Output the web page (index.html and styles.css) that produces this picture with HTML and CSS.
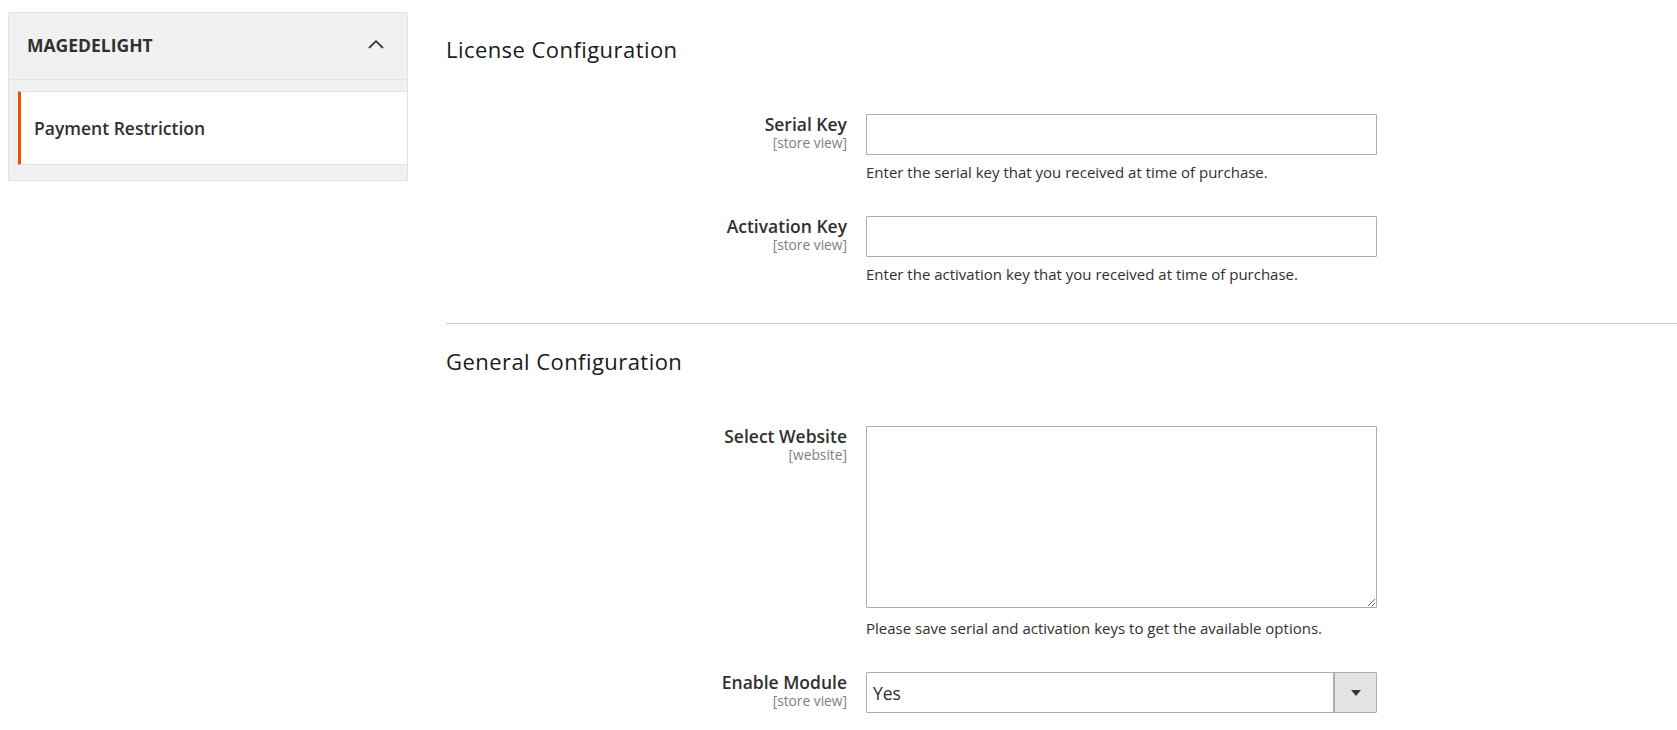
FILE: index.html
```html
<!DOCTYPE html>
<html lang="en">
<head>
<meta charset="utf-8">
<title>Configuration</title>
<link rel="stylesheet" href="styles.css">
</head>
<body>
<div class="page">
  <aside class="nav">
    <div class="nav-head">
      <span class="nav-title">MAGEDELIGHT</span>
      <svg class="chev" width="16" height="9" viewBox="0 0 16 9"><path d="M1 8 L8 1.2 L15 8" fill="none" stroke="#41362f" stroke-width="1.8"/></svg>
    </div>
    <div class="nav-list">
      <div class="nav-item">Payment Restriction</div>
    </div>
  </aside>
  <main class="main">
    <section class="section">
      <h2 class="section-title">License Configuration</h2>
      <div class="fields">
        <div class="field">
          <div class="label"><span class="label-text">Serial Key</span><span class="scope">[store view]</span></div>
          <div class="control">
            <input class="input" type="text">
            <div class="note">Enter the serial key that you received at time of purchase.</div>
          </div>
        </div>
        <div class="field">
          <div class="label"><span class="label-text">Activation Key</span><span class="scope">[store view]</span></div>
          <div class="control">
            <input class="input" type="text">
            <div class="note">Enter the activation key that you received at time of purchase.</div>
          </div>
        </div>
      </div>
    </section>
    <hr class="divider">
    <section class="section">
      <h2 class="section-title section-title-second">General Configuration</h2>
      <div class="fields fields-second">
        <div class="field">
          <div class="label"><span class="label-text">Select Website</span><span class="scope">[website]</span></div>
          <div class="control">
            <textarea class="textarea"></textarea>
            <div class="note note-textarea">Please save serial and activation keys to get the available options.</div>
          </div>
        </div>
        <div class="field">
          <div class="label"><span class="label-text">Enable Module</span><span class="scope">[store view]</span></div>
          <div class="control">
            <div class="select">
              <span class="select-value">Yes</span>
              <span class="select-btn"><span class="tri"></span></span>
            </div>
          </div>
        </div>
      </div>
    </section>
  </main>
</div>
</body>
</html>
```
FILE: styles.css
```css
* { box-sizing: border-box; }
html, body { margin: 0; padding: 0; background: #fff; }
body {
  font-family: "Open Sans", "DejaVu Sans", sans-serif;
  color: #303030;
  overflow: hidden;
}
.page {
  display: flex;
  align-items: flex-start;
  padding: 12px 0 0 8px;
  gap: 38px;
  width: 1677px;
}
.nav {
  flex: none;
  width: 400px;
  height: 169px;
  background: #f1f1f1;
  border: 1px solid #e3e3e3;
}
.nav-head {
  height: 67px;
  border-bottom: 1px solid #e3e3e3;
  display: flex;
  align-items: center;
  justify-content: space-between;
  padding: 0 23px 2px 18px;
}
.nav-title {
  font-size: 17.5px;
  font-weight: 700;
  color: #303030;
  line-height: 24px;
}
.chev { display: block; margin-top: -1px; }
.nav-list { padding: 11px 0 0 9px; }
.nav-item {
  height: 74px;
  background: #fff;
  border-top: 1px solid #e3e3e3;
  border-bottom: 1px solid #e3e3e3;
  border-left: 3px solid #eb5202;
  display: flex;
  align-items: center;
  padding-left: 13px;
  font-size: 17.5px;
  font-weight: 600;
  color: #303030;
}
.main { flex: 1; min-width: 0; }
.section-title {
  margin: 22px 0 0;
  font-size: 22px;
  line-height: 30px;
  font-weight: 400;
  letter-spacing: 0.02em;
  color: #1a1a1a;
}
.section-title-second { margin-top: 22px; }
.fields {
  margin-top: 50px;
  display: flex;
  flex-direction: column;
  gap: 33px;
}
.fields-second { margin-top: 50px; }
.field {
  display: grid;
  grid-template-columns: 401px 511px;
  column-gap: 19px;
  align-items: start;
}
.label {
  display: flex;
  flex-direction: column;
  align-items: flex-end;
  text-align: right;
}
.label-text {
  font-size: 17.5px;
  font-weight: 600;
  line-height: 21px;
  color: #303030;
}
.scope {
  font-size: 13.75px;
  line-height: 16px;
  color: #808080;
}
.control { display: flex; flex-direction: column; }
.input {
  display: block;
  width: 511px;
  height: 41px;
  border: 1px solid #adadad;
  border-radius: 1px;
  background: #fff;
  margin: 0;
  padding: 0 8px;
  font: inherit;
}
.textarea {
  display: block;
  width: 511px;
  height: 182px;
  border: 1px solid #adadad;
  border-radius: 1px;
  background: #fff;
  margin: 0;
  padding: 8px;
  font: inherit;
  resize: vertical;
}
.note {
  margin-top: 7px;
  font-size: 15px;
  line-height: 21px;
  color: #303030;
}
.note-textarea { margin-top: 10px; }
.select {
  display: flex;
  align-items: stretch;
  width: 511px;
  height: 41px;
  border: 1px solid #adadad;
  border-radius: 1px;
  background: #fff;
}
.select-value {
  flex: 1;
  display: flex;
  align-items: center;
  padding-left: 6px;
  font-size: 17.5px;
  color: #303030;
}
.select-btn {
  width: 43px;
  flex: none;
  background: #e3e3e3;
  border-left: 2px solid #adadad;
  display: flex;
  align-items: center;
  justify-content: center;
}
.tri {
  width: 0;
  height: 0;
  border-left: 5px solid transparent;
  border-right: 5px solid transparent;
  border-top: 6px solid #41362f;
  margin-top: 1px;
}
.divider {
  margin: 38px 0 0;
  border: 0;
  border-top: 1px solid #cccccc;
  height: 0;
}
```
